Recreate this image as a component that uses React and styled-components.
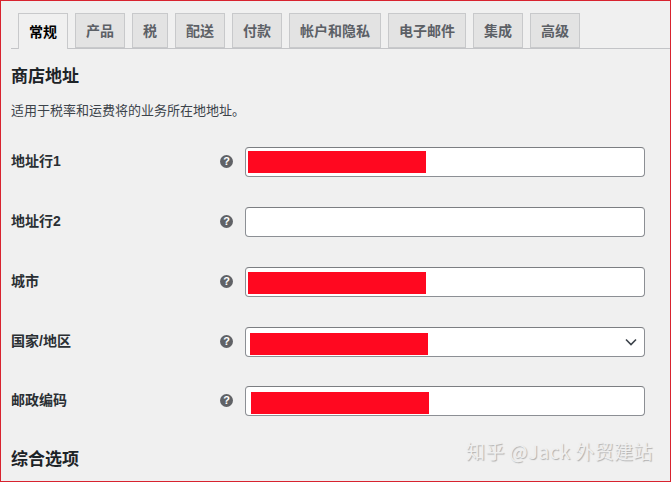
import React from 'react';
import styled, { createGlobalStyle } from 'styled-components';

const GlobalStyle = createGlobalStyle`
  html, body {
    margin: 0;
    padding: 0;
    background: #f0f0f0;
    overflow: hidden;
  }
  * {
    box-sizing: border-box;
  }
`;

const Page = styled.div`
  position: relative;
  width: 671px;
  height: 482px;
  overflow: hidden;
  padding: 12px 0 0 10px;
  background: #f0f0f0;
  border: 1px solid #d8232f;
  font-family: "Liberation Sans", "Noto Sans CJK SC", sans-serif;
  color: #3c434a;
`;

const Tabs = styled.nav`
  display: flex;
  gap: 7px;
  height: 36px;
  padding-left: 7px;
  border-bottom: 1px solid #c3c4c7;
`;

const Tab = styled.a`
  display: flex;
  align-items: center;
  justify-content: center;
  width: ${(p) => p.$width}px;
  height: ${(p) => (p.$active ? 36 : 35)}px;
  padding-bottom: 2px;
  font-size: 14px;
  font-weight: 600;
  color: ${(p) => (p.$active ? '#000' : '#5c6066')};
  background: ${(p) => (p.$active ? '#f0f0f0' : '#e3e3e3')};
  border: 1px solid #c8c9cb;
  border-bottom: ${(p) => (p.$active ? 'none' : '1px solid #c8c9cb')};
`;

const Heading = styled.h2`
  margin: ${(p) => p.$top ?? 15}px 0 0;
  height: 24px;
  font-size: 17px;
  line-height: 24px;
  font-weight: 600;
  color: #1d2327;
`;

const Description = styled.p`
  margin: 13px 0 0;
  height: 18px;
  font-size: 13px;
  line-height: 18px;
  color: #3c434a;
`;

const Form = styled.div`
  margin-top: 27px;
  display: flex;
  flex-direction: column;
`;

const Row = styled.div`
  display: grid;
  grid-template-columns: 209px 25px 400px;
  align-items: center;
  height: 30px;
  margin-bottom: ${(p) => p.$gap ?? 30}px;
`;

const Label = styled.label`
  margin-bottom: 2px;
  font-size: 14px;
  line-height: 20px;
  font-weight: 600;
  color: #2a2f33;
`;

const HelpIcon = styled.span`
  display: flex;
  align-items: center;
  justify-content: center;
  width: 13px;
  height: 13px;
  margin-bottom: 1px;
  border-radius: 50%;
  background: #606266;
  color: #fff;
  font-family: "Liberation Sans", sans-serif;
  font-size: 11px;
  font-weight: 700;
  line-height: 13px;
`;

const Field = styled.div`
  position: relative;
  display: flex;
  align-items: center;
  height: 30px;
  padding-left: ${(p) => p.$inset}px;
  padding-top: ${(p) => p.$drop ?? 0}px;
  background: #fff;
  border: 1px solid #8c8f94;
  border-top-color: #7c7e82;
  border-radius: 4px;
`;

const Redaction = styled.div`
  width: 178px;
  height: 22px;
  background: #ff0820;
`;

const Chevron = styled.svg`
  position: absolute;
  right: 7px;
  top: 9px;
  width: 12px;
  height: 10px;
`;

const Watermark = styled.div`
  position: absolute;
  left: 465px;
  top: 437px;
  font-family: "Noto Sans CJK SC", sans-serif;
  font-size: 19px;
  line-height: 26px;
  letter-spacing: 0.4px;
  white-space: nowrap;
  color: #efefef;
  text-shadow: 1px 1px 1px #b0b0b0;
`;

const tabs = [
  { name: '常规', width: 50, active: true },
  { name: '产品', width: 50 },
  { name: '税', width: 36 },
  { name: '配送', width: 50 },
  { name: '付款', width: 50 },
  { name: '帐户和隐私', width: 92 },
  { name: '电子邮件', width: 78 },
  { name: '集成', width: 50 },
  { name: '高级', width: 50 },
];

const rows = [
  { label: '地址行1', inset: 2, filled: true },
  { label: '地址行2', inset: 2 },
  { label: '城市', inset: 2, filled: true, drop: 1 },
  { label: '国家/地区', inset: 4, filled: true, select: true, gap: 29, drop: 4 },
  { label: '邮政编码', inset: 5, filled: true, gap: 0, drop: 4 },
];

export default function App() {
  return (
    <Page>
      <GlobalStyle />
      <Tabs>
        {tabs.map((t) => (
          <Tab key={t.name} $width={t.width} $active={t.active}>
            {t.name}
          </Tab>
        ))}
      </Tabs>
      <Heading $top={16}>商店地址</Heading>
      <Description>适用于税率和运费将的业务所在地地址。</Description>
      <Form>
        {rows.map((r) => (
          <Row key={r.label} $gap={r.gap}>
            <Label>{r.label}</Label>
            <HelpIcon>?</HelpIcon>
            <Field $inset={r.inset} $drop={r.drop}>
              {r.filled && <Redaction />}
              {r.select && (
                <Chevron viewBox="0 0 12 10">
                  <path d="M1 2.5 L6 7.5 L11 2.5" fill="none" stroke="#3c434a" strokeWidth="1.6" />
                </Chevron>
              )}
            </Field>
          </Row>
        ))}
      </Form>
      <Heading $top={32}>综合选项</Heading>
      <Watermark>知乎 @Jack 外贸建站</Watermark>
    </Page>
  );
}
